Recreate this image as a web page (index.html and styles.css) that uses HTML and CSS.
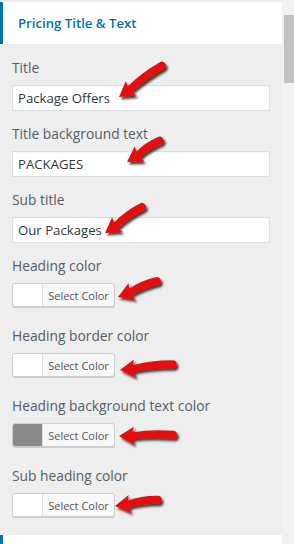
FILE: index.html
```html
<!DOCTYPE html>
<html>
<head>
<meta charset="utf-8">
<link rel="stylesheet" href="styles.css">
</head>
<body>
<div class="page">
  <div class="panel">
    <div class="section-head">Pricing Title &amp; Text</div>
    <div class="controls">
      <div class="field">
        <label class="label">Title</label>
        <input class="text-input" type="text" value="Package Offers">
      </div>
      <div class="field">
        <label class="label">Title background text</label>
        <input class="text-input" type="text" value="PACKAGES">
      </div>
      <div class="field">
        <label class="label">Sub title</label>
        <input class="text-input" type="text" value="Our Packages">
      </div>
      <div class="field color-field">
        <label class="label">Heading color</label>
        <button class="color-btn"><span class="swatch"></span><span class="btn-text">Select Color</span></button>
      </div>
      <div class="field color-field">
        <label class="label">Heading border color</label>
        <button class="color-btn"><span class="swatch"></span><span class="btn-text">Select Color</span></button>
      </div>
      <div class="field color-field">
        <label class="label">Heading background text color</label>
        <button class="color-btn"><span class="swatch swatch-gray"></span><span class="btn-text">Select Color</span></button>
      </div>
      <div class="field color-field last">
        <label class="label">Sub heading color</label>
        <button class="color-btn"><span class="swatch"></span><span class="btn-text">Select Color</span></button>
      </div>
    </div>
    <div class="section-next"></div>
  </div>
  <div class="scrollbar"><div class="thumb"></div></div>
</div>

<svg class="arrows" width="294" height="544" viewBox="0 0 294 544" xmlns="http://www.w3.org/2000/svg">
  <defs>
    <filter id="sh" x="-20%" y="-20%" width="140%" height="160%">
      <feDropShadow dx="2" dy="2.5" stdDeviation="1.3" flood-color="#000" flood-opacity="0.75"/>
    </filter>
  </defs>
  <g filter="url(#sh)" fill="#e8100e">
    <g transform="translate(119 97) rotate(-36)">
      <path d="M0 0 L15 -9 L13.5 -3.4 Q32 -6.5 53 -4.2 A4 4 0 0 1 53 3.8 Q32 1.5 13.5 3.4 L15 9 Z"/>
    </g>
    <g transform="translate(127 162) rotate(-33)">
      <path d="M0 0 L15 -9 L13.5 -3.4 Q25 -6.5 39 -4.2 A4 4 0 0 1 39 3.8 Q25 1.5 13.5 3.4 L15 9 Z"/>
    </g>
    <g transform="translate(105 233) rotate(-35)">
      <path d="M0 0 L15 -9 L13.5 -3.4 Q28 -6.5 45 -4.2 A4 4 0 0 1 45 3.8 Q28 1.5 13.5 3.4 L15 9 Z"/>
    </g>
    <g transform="translate(118 297) rotate(-22)">
      <path d="M0 0 L15 -9 L13.5 -3.4 Q27 -6.5 42 -4.2 A4 4 0 0 1 42 3.8 Q27 1.5 13.5 3.4 L15 9 Z"/>
    </g>
    <g transform="translate(120 370) rotate(-6)">
      <path d="M0 0 L15 -9 L13.5 -3.4 Q32 -6.5 53 -4.2 A4 4 0 0 1 53 3.8 Q32 1.5 13.5 3.4 L15 9 Z"/>
    </g>
    <g transform="translate(119 436) rotate(-1)">
      <path d="M0 0 L15 -9 L13.5 -3.4 Q32 -6.5 54 -4.2 A4 4 0 0 1 54 3.8 Q32 1.5 13.5 3.4 L15 9 Z"/>
    </g>
    <g transform="translate(115 506) rotate(-8)">
      <path d="M0 0 L15 -9 L13.5 -3.4 Q27 -6.5 43 -4.2 A4 4 0 0 1 43 3.8 Q27 1.5 13.5 3.4 L15 9 Z"/>
    </g>
  </g>
</svg>
</body>
</html>
```

FILE: styles.css
```css
* { box-sizing: border-box; }
html, body {
  margin: 0;
  padding: 0;
  background: #eeeeee;
  font-family: "Open Sans", "Noto Sans", sans-serif;
  overflow: hidden;
}
.page {
  display: flex;
  width: 294px;
  height: 544px;
}
.panel {
  width: 282px;
  padding-top: 2px;
  display: flex;
  flex-direction: column;
  background: #eeeeee;
}
.section-head {
  height: 42px;
  background: #ffffff;
  border-left: 3px solid #0073aa;
  padding-left: 15px;
  display: flex;
  align-items: center;
  font-size: 13.2px;
  font-weight: 600;
  color: #0073aa;
}
.controls {
  padding: 14px 12px 0 12px;
  display: flex;
  flex-direction: column;
}
.field {
  display: flex;
  flex-direction: column;
  margin-bottom: 13px;
}
.color-field { margin-bottom: 19px; }
.color-field.last { margin-bottom: 18px; }
.label {
  display: block;
  font-size: 13.8px;
  line-height: 20px;
  color: #555d66;
  margin-bottom: 7px;
}
.text-input {
  width: 258px;
  height: 26px;
  margin: 0;
  border: 1px solid #dddddd;
  background: #ffffff;
  padding: 0 5px;
  font-family: inherit;
  font-size: 13.2px;
  color: #32373c;
  box-shadow: inset 0 1px 2px rgba(0,0,0,0.04);
  outline: none;
}
.color-btn {
  display: flex;
  align-items: stretch;
  width: 103px;
  height: 24px;
  margin: 0;
  padding: 0;
  border: 1px solid #cccccc;
  border-radius: 3px;
  background: #f7f7f7;
  box-shadow: 0 1px 0 #cccccc;
  overflow: hidden;
  font-family: inherit;
}
.swatch {
  width: 30px;
  background: #ffffff;
  border-right: 1px solid #dddddd;
}
.swatch-gray { background: #8a8b88; }
.btn-text {
  flex: 1;
  display: flex;
  align-items: center;
  justify-content: center;
  font-size: 11px;
  color: #555555;
}
.section-next {
  flex: 1;
  background: #ffffff;
  border-left: 3px solid #0073aa;
}
.scrollbar {
  width: 12px;
  background: #f1f1f1;
  padding-top: 15px;
  padding-left: 2px;
}
.thumb {
  width: 10px;
  height: 68px;
  background: #c1c1c1;
}
.arrows {
  position: absolute;
  left: 0;
  top: 0;
  pointer-events: none;
}
```
